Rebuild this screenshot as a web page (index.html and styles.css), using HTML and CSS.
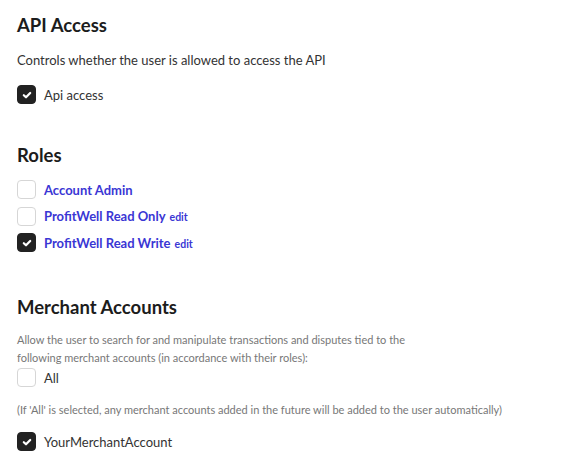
FILE: index.html
```html
<!DOCTYPE html>
<html>
<head>
<meta charset="utf-8">
<link rel="stylesheet" href="styles.css">
</head>
<body>
<div class="page">
  <section class="section api">
    <h2 class="title">API Access</h2>
    <p class="desc">Controls whether the user is allowed to access the API</p>
    <label class="check">
      <span class="box on"><svg viewBox="0 0 12 12"><path d="M2.8 6.2 5 8.3 9.2 4"/></svg></span>
      <span class="text">Api access</span>
    </label>
  </section>

  <section class="section roles">
    <h2 class="title">Roles</h2>
    <ul class="role-list">
      <li class="check role">
        <span class="box"></span>
        <span class="role-name">Account Admin</span>
      </li>
      <li class="check role">
        <span class="box"></span>
        <span class="role-name">ProfitWell Read Only</span>
        <span class="edit">edit</span>
      </li>
      <li class="check role">
        <span class="box on"><svg viewBox="0 0 12 12"><path d="M2.8 6.2 5 8.3 9.2 4"/></svg></span>
        <span class="role-name">ProfitWell Read Write</span>
        <span class="edit">edit</span>
      </li>
    </ul>
  </section>

  <section class="section merchants">
    <h2 class="title">Merchant Accounts</h2>
    <p class="small-desc">Allow the user to search for and manipulate transactions and disputes tied to the<br>following merchant accounts (in accordance with their roles):</p>
    <label class="check">
      <span class="box"></span>
      <span class="text">All</span>
    </label>
    <p class="note">(If 'All' is selected, any merchant accounts added in the future will be added to the user automatically)</p>
    <label class="check">
      <span class="box on"><svg viewBox="0 0 12 12"><path d="M2.8 6.2 5 8.3 9.2 4"/></svg></span>
      <span class="text">YourMerchantAccount</span>
    </label>
  </section>
</div>
</body>
</html>
```

FILE: styles.css
```css
* { box-sizing: border-box; }
html, body { margin: 0; padding: 0; background: #fff; }
body {
  font-family: Lato, "Open Sans", sans-serif;
  color: #2b2b2b;
}
.page {
  padding: 14px 17px 0;
}
.section { margin: 0; }
.title {
  margin: 0;
  font-size: 18.5px;
  font-weight: 700;
  color: #1c1c1c;
  line-height: 22px;
}
.desc {
  margin: 15px 0 0;
  font-size: 13px;
  line-height: 18px;
  color: #333;
}
.check {
  display: flex;
  align-items: center;
  gap: 8px;
}
.box {
  width: 19px;
  height: 19px;
  border: 1px solid #d6d6d6;
  border-radius: 4px;
  background: #fff;
  flex: none;
  display: flex;
  align-items: center;
  justify-content: center;
}
.box.on {
  background: #222;
  border-color: #222;
}
.box svg {
  width: 12px;
  height: 12px;
  fill: none;
  stroke: #fff;
  stroke-width: 2.2;
  stroke-linecap: round;
  stroke-linejoin: round;
}
.api .check { margin-top: 16px; }
.text {
  font-size: 13px;
  color: #333;
}
.roles { margin-top: 40px; }
.role-list {
  list-style: none;
  margin: 14px 0 0;
  padding: 0;
  display: flex;
  flex-direction: column;
  gap: 7.5px;
}
.role { gap: 8px; }
.role-name {
  font-size: 13px;
  font-weight: 700;
  color: #3a36d4;
}
.edit {
  font-size: 10.5px;
  font-weight: 700;
  color: #3a36d4;
  margin-left: -4px;
  padding-top: 2px;
}
.merchants { margin-top: 44px; }
.small-desc {
  margin: 13px 0 0;
  font-size: 11px;
  line-height: 18px;
  color: #777;
}
.merchants .check { margin-top: 1px; }
.merchants .text { font-size: 13px; }
.note {
  margin: 14px 0 13px;
  font-size: 11px;
  color: #777;
  line-height: 18px;
}
```
